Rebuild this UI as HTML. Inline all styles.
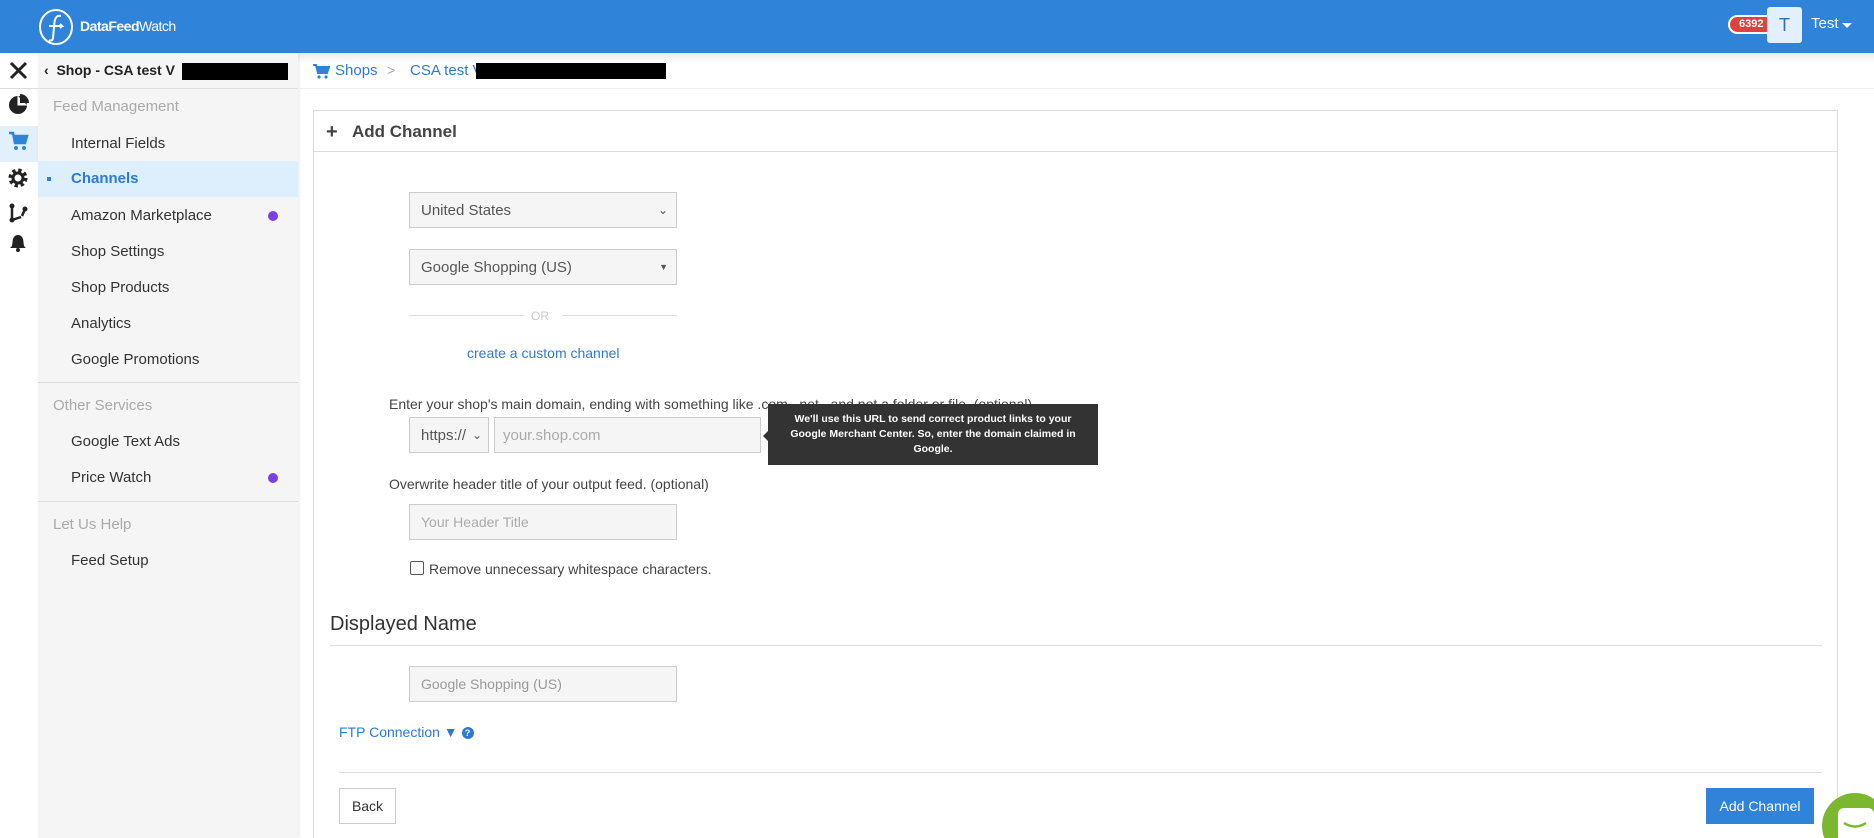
<!DOCTYPE html>
<html><head><style>
*{box-sizing:border-box;margin:0;padding:0}
html,body{width:1874px;height:838px;overflow:hidden}
body{background:#fff;font-family:"Liberation Sans",Arial,sans-serif;position:relative;color:#333}
.a{position:absolute}
.hdr{left:0;top:0;width:1874px;height:53px;background:#2f84d9}
.ic{left:0;top:53px;width:38px;height:785px;background:#fff;box-shadow:1px 0 2px rgba(0,0,0,.08)}
.sb{left:38px;top:53px;width:260px;height:785px;background:#f5f5f5;box-shadow:1px 0 3px rgba(0,0,0,.1)}
.it{position:absolute;left:33px;font-size:15px;color:#333}
.sec{position:absolute;left:15px;font-size:15px;color:#aaa}
.sep{position:absolute;left:0;width:260px;height:1px;background:#ddd}
.dot{position:absolute;left:230px;width:10px;height:10px;border-radius:50%;background:#7b3fe4}
.sel{position:absolute;background:#f5f5f5;border:1px solid #ccc;font-size:15px;color:#555;padding-left:11px;display:flex;align-items:center}
.lbl{position:absolute;font-size:14px;color:#444}
</style></head><body>
<div class="a hdr"></div>
<svg class="a" style="left:38px;top:8px" width="36" height="38" viewBox="0 0 36 38"><ellipse cx="18" cy="19" rx="16" ry="17" fill="none" stroke="#fff" stroke-width="2"/><path d="M23 8c-4-1-6 2-6.5 6L15 30c-.5 3-3 3-4 2M11 18h13l-2-2m2 2l-2 2" fill="none" stroke="#fff" stroke-width="2"/></svg>
<div class="a" style="left:80px;top:18px;color:#fff;font-size:14px;font-weight:bold;letter-spacing:-.5px">DataFeed<span style="font-weight:normal">Watch</span></div>
<div class="a" style="left:1728px;top:15px;width:48px;height:19px;background:#e04040;border:2px solid #fff;border-radius:10px;color:#fff;font-size:11px;font-weight:bold;line-height:15px;padding-left:9px">6392</div>
<div class="a" style="left:1767px;top:7px;width:35px;height:36px;background:#e2effc;border-radius:3px;color:#2f6fb8;font-size:18px;text-align:center;line-height:36px">T</div>
<div class="a" style="left:1811px;top:15px;color:#fff;font-size:15px">Test</div>
<div class="a" style="left:1842px;top:23px;border:5px solid transparent;border-top-color:#fff"></div>
<div class="a" style="left:0;top:53px;width:1874px;height:10px;background:linear-gradient(rgba(0,0,0,.08),rgba(0,0,0,0))"></div>
<div class="a ic"></div>
<div class="a" style="left:0;top:88px;width:38px;height:1px;background:#ddd"></div>
<div class="a" style="left:0;top:126px;width:38px;height:36px;background:#e2effc"></div>
<svg class="a" style="left:0;top:53px" width="38" height="220" viewBox="0 0 38 220">
<path d="M11 10l15 15M26 10L11 25" stroke="#222" stroke-width="3"/>
<circle cx="18" cy="52" r="9" fill="#222"/><path d="M18 43v9h9" fill="#fff" stroke="#fff" stroke-width="1"/><path d="M20 41v9h9a9 9 0 0 0-9-9z" fill="#222"/>
<path d="M9 80h4l2 10h10l2-7H14" fill="#2f84d9" stroke="#2f84d9" stroke-width="2.5"/><circle cx="16" cy="95" r="2" fill="#2f84d9"/><circle cx="24" cy="95" r="2" fill="#2f84d9"/>
<circle cx="18" cy="125" r="7" fill="none" stroke="#222" stroke-width="5" stroke-dasharray="3 2.5"/><circle cx="18" cy="125" r="5" fill="none" stroke="#222" stroke-width="3"/>
<path d="M12 153v14l9-3M22 163l3-7" fill="none" stroke="#222" stroke-width="2.5"/><circle cx="12" cy="153" r="2.5" fill="#222"/><circle cx="12" cy="167" r="2.5" fill="#222"/><circle cx="25" cy="156" r="2.5" fill="#222"/>
<path d="M10 195c3-2 2-5 3-9 1-3 3-4 5-4s4 1 5 4c1 4 0 7 3 9z" fill="#222"/><circle cx="18" cy="197" r="2" fill="#222"/>
</svg>
<div class="a sb">
<div class="sep" style="top:35px"></div>
<div style="position:absolute;left:6px;top:9px;font-size:14px;font-weight:bold;color:#222;white-space:nowrap">‹&nbsp; Shop - CSA test V</div>
<div style="position:absolute;left:144px;top:10px;width:106px;height:17px;background:#000"></div>
<div class="sec" style="top:45px">Feed Management</div>
<div class="it" style="top:82px">Internal Fields</div>
<div style="position:absolute;left:0;top:108px;width:260px;height:36px;background:#ddeefc"></div>
<div style="position:absolute;left:9px;top:124px;width:4px;height:4px;background:#2f84d9"></div>
<div class="it" style="top:117px;color:#2f7ad0;font-weight:bold">Channels</div>
<div class="it" style="top:154px">Amazon Marketplace</div><div class="dot" style="top:158px"></div>
<div class="it" style="top:190px">Shop Settings</div>
<div class="it" style="top:226px">Shop Products</div>
<div class="it" style="top:262px">Analytics</div>
<div class="it" style="top:298px">Google Promotions</div>
<div class="sep" style="top:329px"></div>
<div class="sec" style="top:344px">Other Services</div>
<div class="it" style="top:380px">Google Text Ads</div>
<div class="it" style="top:416px">Price Watch</div><div class="dot" style="top:420px"></div>
<div class="sep" style="top:448px"></div>
<div class="sec" style="top:463px">Let Us Help</div>
<div class="it" style="top:499px">Feed Setup</div>
</div>
<div class="a" style="left:298px;top:88px;width:1576px;height:1px;background:#f0f0f0"></div>
<svg class="a" style="left:312px;top:62px" width="18" height="18" viewBox="0 0 18 18"><path d="M1 3h3l2 8h9l2-6H5" fill="#2f84d9" stroke="#2f84d9" stroke-width="2"/><circle cx="7" cy="15" r="1.6" fill="#2f84d9"/><circle cx="14" cy="15" r="1.6" fill="#2f84d9"/></svg>
<div class="a" style="left:335px;top:62px;font-size:15px;color:#2f7ad0">Shops</div>
<div class="a" style="left:387px;top:62px;font-size:14px;color:#aaa">&gt;</div>
<div class="a" style="left:410px;top:62px;font-size:15px;color:#2f7ad0">CSA test V</div>
<div class="a" style="left:476px;top:63px;width:190px;height:16px;background:#000"></div>
<div class="a" style="left:313px;top:110px;width:1525px;height:760px;border:1px solid #ddd"></div>
<div class="a" style="left:313px;top:151px;width:1525px;height:1px;background:#ddd"></div>
<div class="a" style="left:326px;top:121px;font-size:20px;font-weight:bold;color:#444">+</div>
<div class="a" style="left:352px;top:122px;font-size:17px;font-weight:bold;color:#444">Add Channel</div>
<div class="sel" style="left:409px;top:192px;width:268px;height:36px">United States<span style="position:absolute;right:8px;font-size:12px">⌄</span></div>
<div class="sel" style="left:409px;top:249px;width:268px;height:36px">Google Shopping (US)<span style="position:absolute;right:8px;font-size:9px">▼</span></div>
<div class="a" style="left:409px;top:315px;width:115px;height:1px;background:#ddd"></div>
<div class="a" style="left:562px;top:315px;width:115px;height:1px;background:#ddd"></div>
<div class="a" style="left:531px;top:309px;font-size:12px;color:#ccc">OR</div>
<div class="a" style="left:467px;top:345px;font-size:14px;color:#2f7ad0">create a custom channel</div>
<div class="lbl" style="left:389px;top:396px">Enter your shop's main domain, ending with something like .com, .net., and not a folder or file. (optional)</div>
<div class="sel" style="left:409px;top:417px;width:80px;height:36px">https://<span style="position:absolute;right:6px;font-size:12px">⌄</span></div>
<div class="sel" style="left:494px;top:417px;width:267px;height:36px;color:#aaa;padding-left:8px">your.shop.com</div>
<div class="a" style="left:763px;top:431px;border:5px solid transparent;border-right-color:#333;border-left:0"></div>
<div class="a" style="left:768px;top:404px;width:330px;height:61px;background:#333;color:#fff;font-size:10.5px;font-weight:bold;text-align:center;line-height:15px;padding:8px 10px">We'll use this URL to send correct product links to your Google Merchant Center. So, enter the domain claimed in Google.</div>
<div class="lbl" style="left:389px;top:476px">Overwrite header title of your output feed. (optional)</div>
<div class="sel" style="left:409px;top:504px;width:268px;height:36px;color:#aaa;font-size:14px">Your Header Title</div>
<div class="a" style="left:410px;top:561px;width:14px;height:14px;border:1px solid #555;border-radius:2px;background:#fff"></div>
<div class="lbl" style="left:429px;top:561px">Remove unnecessary whitespace characters.</div>
<div class="a" style="left:330px;top:613px;font-size:20px;color:#333">Displayed Name</div>
<div class="a" style="left:330px;top:645px;width:1492px;height:1px;background:#ddd"></div>
<div class="sel" style="left:409px;top:666px;width:268px;height:36px;color:#999;font-size:14px">Google Shopping (US)</div>
<div class="a" style="left:339px;top:724px;font-size:14px;color:#2f7ad0">FTP Connection ▼ <span style="display:inline-block;width:12px;height:12px;border-radius:50%;background:#2f7ad0;color:#fff;font-size:9px;font-weight:bold;text-align:center;line-height:12px;vertical-align:1px">?</span></div>
<div class="a" style="left:339px;top:772px;width:1483px;height:1px;background:#ddd"></div>
<div class="a" style="left:339px;top:788px;width:57px;height:36px;border:1px solid #ccc;background:#fff;font-size:14px;text-align:center;line-height:34px">Back</div>
<div class="a" style="left:1706px;top:788px;width:108px;height:36px;background:#2f84d9;color:#fff;font-size:14px;text-align:center;line-height:36px">Add Channel</div>
<div class="a" style="left:1822px;top:793px;width:66px;height:66px;border-radius:50%;background:#7cb82f"></div>
<div class="a" style="left:1838px;top:808px;width:36px;height:36px;border-radius:6px;background:#fff"></div>
<svg class="a" style="left:1840px;top:820px" width="30" height="12"><path d="M4 3q11 7 22 0" fill="none" stroke="#7cb82f" stroke-width="2.5"/></svg>
</body></html>
